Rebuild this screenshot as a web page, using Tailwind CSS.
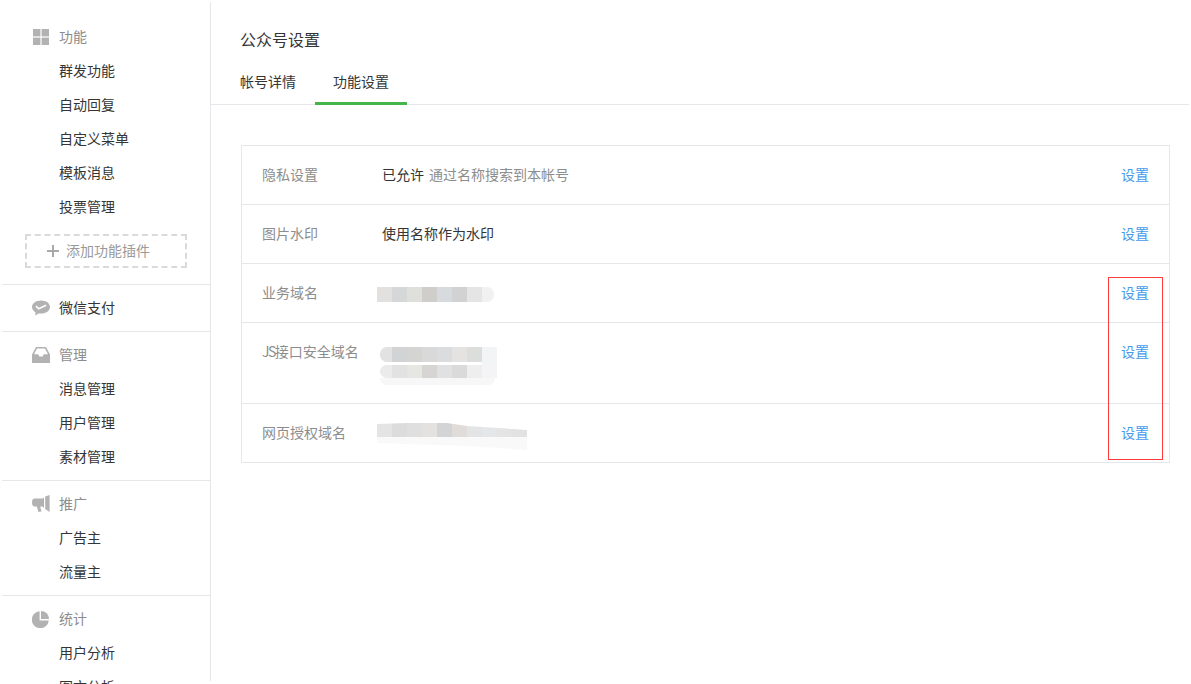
<!DOCTYPE html>
<html lang="zh-CN">
<head>
<meta charset="utf-8">
<title>公众号设置</title>
<script src="https://cdn.jsdelivr.net/npm/@tailwindcss/browser@4"></script>
</head>
<body class="bg-white">
<div class="flex h-[684px] w-[1191px] overflow-hidden bg-white font-['Microsoft_YaHei','Noto_Sans_CJK_SC',sans-serif] text-sm text-[#353535]">
  <aside class="mt-[2px] h-[679px] w-[211px] shrink-0 border-r border-[#e7e7eb] pt-[18px]">
    <div class="flex h-[34px] items-center text-[#8d8d8d]">
      <span class="flex w-[59px] justify-start pl-[33px]">
        <svg width="16" height="16" viewBox="0 0 16 16" fill="#b2b2b2"><rect width="7.4" height="7.4"/><rect x="8.6" width="7.4" height="7.4"/><rect y="8.6" width="7.4" height="7.4"/><rect x="8.6" y="8.6" width="7.4" height="7.4"/></svg>
      </span>
      <span class="pb-[2px]">功能</span>
    </div>
    <div class="h-[34px] pl-[59px] leading-8">群发功能</div>
    <div class="h-[34px] pl-[59px] leading-8">自动回复</div>
    <div class="h-[34px] pl-[59px] leading-8">自定义菜单</div>
    <div class="h-[34px] pl-[59px] leading-8">模板消息</div>
    <div class="h-[34px] pl-[59px] leading-8">投票管理</div>
    <div class="mb-4 ml-[25px] mt-[10px] flex h-[34px] w-[162px] items-center border-2 border-dashed border-[#d9dadc] pl-5 text-[#9a9a9a]">
      <svg width="12" height="12" viewBox="0 0 12 12" fill="#a8a8a8" class="mr-[7px]"><rect x="5" width="2" height="12"/><rect y="5" width="12" height="2"/></svg>
      <span class="pb-[2px]">添加功能插件</span>
    </div>
    <div class="ml-[2px] border-t border-[#e7e7eb] py-[6px]">
      <div class="flex h-[34px] items-center">
        <span class="flex w-[57px] pl-[30px]">
          <svg width="18" height="16" viewBox="0 0 18 16"><path fill="#b2b2b2" d="M9 0.5C4 0.5 0 3.4 0 7c0 2.1 1.4 4 3.5 5.2L3.2 15.5l3.3-2.1c.8.2 1.6.2 2.5.2 5 0 9-2.9 9-6.6S14 .5 9 .5z"/><path fill="none" stroke="#fff" stroke-width="1.6" d="M4 6l2.6 2.8 7.6-3.6"/></svg>
        </span>
        <span class="pb-[2px]">微信支付</span>
      </div>
    </div>
    <div class="ml-[2px] border-t border-[#e7e7eb] py-[6px]">
      <div class="-ml-[2px] flex h-[34px] items-center text-[#8d8d8d]">
        <span class="flex w-[59px] pl-[32px]">
          <svg width="18" height="16" viewBox="0 0 18 16"><path fill="#b2b2b2" fill-rule="evenodd" d="M4 0h10l4 7.5V16H0V7.5zM5 1.6L2 7.2h4.2L7.4 9.4h3.2l1.2-2.2H16L13 1.6z"/></svg>
        </span>
        <span class="pb-[2px]">管理</span>
      </div>
      <div class="h-[34px] pl-[57px] leading-8">消息管理</div>
      <div class="h-[34px] pl-[57px] leading-8">用户管理</div>
      <div class="h-[34px] pl-[57px] leading-8">素材管理</div>
    </div>
    <div class="ml-[2px] border-t border-[#e7e7eb] py-[6px]">
      <div class="-ml-[2px] flex h-[34px] items-center text-[#8d8d8d]">
        <span class="flex w-[59px] pl-[32px]">
          <svg width="18" height="18" viewBox="0 0 18 18"><path fill="#b2b2b2" d="M2.5 3.5H10.5L12 2.5V13L10.5 11.5H8.2L9.5 16.5 6.5 17 4.8 11.5H2.5C1 11.5 0 10 0 7.5S1 3.5 2.5 3.5z"/><path fill="#b2b2b2" d="M13.2 1.6L17.6 0v17l-4.4-3z"/></svg>
        </span>
        <span class="pb-[2px]">推广</span>
      </div>
      <div class="h-[34px] pl-[57px] leading-8">广告主</div>
      <div class="h-[34px] pl-[57px] leading-8">流量主</div>
    </div>
    <div class="ml-[2px] border-t border-[#e7e7eb] py-[6px]">
      <div class="-ml-[2px] flex h-[34px] items-center text-[#8d8d8d]">
        <span class="flex w-[59px] pl-[32px]">
          <svg width="17" height="17" viewBox="0 0 17 17"><path fill="#b2b2b2" d="M7.6 0.2V9.4H16.8A8.5 8.5 0 1 1 7.6 0.2z"/><path fill="#b2b2b2" d="M9 0a8 8 0 0 1 8 8H9z"/></svg>
        </span>
        <span class="pb-[2px]">统计</span>
      </div>
      <div class="h-[34px] pl-[57px] leading-8">用户分析</div>
      <div class="h-[34px] pl-[57px] leading-8">图文分析</div>
    </div>
  </aside>

  <main class="mr-[2px] min-w-0 flex-1">
    <header class="h-[105px] border-b border-[#e7e7eb] pl-[29px] pt-[27px]">
      <h1 class="h-6 text-base leading-6 text-[#353535]">公众号设置</h1>
      <nav class="mt-[13px] flex h-[41px]">
        <a class="mr-[19px] h-[41px] leading-[34px]">帐号详情</a>
        <a class="h-[41px] border-b-[3px] border-[#44b549] px-[18px] leading-[34px]">功能设置</a>
      </nav>
    </header>
    <div class="relative ml-[30px] mt-10 w-[929px] border border-[#e7e7eb]">
      <div class="flex h-[59px] border-b border-[#e7e7eb] leading-[56px]">
        <div class="w-[140px] shrink-0 pl-5 text-[#8d8d8d]">隐私设置</div>
        <div class="flex-1">已允许<span class="ml-[5px] text-[#8d8d8d]">通过名称搜索到本帐号</span></div>
        <a class="pr-5 text-[#459ae9]">设置</a>
      </div>
      <div class="flex h-[59px] border-b border-[#e7e7eb] leading-[56px]">
        <div class="w-[140px] shrink-0 pl-5 text-[#8d8d8d]">图片水印</div>
        <div class="flex-1">使用名称作为水印</div>
        <a class="pr-5 text-[#459ae9]">设置</a>
      </div>
      <div class="flex h-[59px] border-b border-[#e7e7eb] leading-[56px]">
        <div class="w-[140px] shrink-0 pl-5 text-[#8d8d8d]">业务域名</div>
        <div class="flex-1 pt-[23px]">
          <div class="-ml-[5px] flex h-[15px] w-[117px] overflow-hidden rounded-r-[7px]">
            <i class="w-[15px] bg-[#e2e1df]"></i><i class="w-[15px] bg-[#d5d7d9]"></i><i class="w-[15px] bg-[#dfdfdb]"></i><i class="w-[15px] bg-[#cfcecb]"></i><i class="w-[15px] bg-[#d7dbde]"></i><i class="w-[15px] bg-[#d2d2d2]"></i><i class="w-[15px] bg-[#e5e5e5]"></i><i class="w-[12px] bg-[#f1f1f1]"></i>
          </div>
        </div>
        <a class="pr-5 text-[#459ae9]">设置</a>
      </div>
      <div class="flex h-[81px] border-b border-[#e7e7eb] leading-[56px]">
        <div class="w-[140px] shrink-0 pl-5 text-[#8d8d8d]"><span class="tracking-[-1.5px]">JS</span>接口安全域名</div>
        <div class="flex-1 pt-6">
          <div class="-ml-[2px] flex h-[15px] w-[117px] overflow-hidden rounded-l-[7px]">
            <i class="w-[12px] bg-[#e2e2e2]"></i><i class="w-[15px] bg-[#d2d3d4]"></i><i class="w-[15px] bg-[#d4d4d2]"></i><i class="w-[15px] bg-[#d9d9d9]"></i><i class="w-[15px] bg-[#dadcdd]"></i><i class="w-[15px] bg-[#e4e3e1]"></i><i class="w-[15px] bg-[#dcdedb]"></i><i class="w-[15px] bg-[#f3f4f6]"></i>
          </div>
          <div class="-ml-[2px] flex h-[3px] w-[117px] justify-end"><i class="w-[15px] bg-[#f3f4f6]"></i></div>
          <div class="-ml-[2px] flex h-[13px] w-[117px] overflow-hidden rounded-l-[7px]">
            <i class="w-[12px] bg-[#ebebeb]"></i><i class="w-[15px] bg-[#e2e2e2]"></i><i class="w-[15px] bg-[#e6e6e3]"></i><i class="w-[15px] bg-[#d6d5d3]"></i><i class="w-[15px] bg-[#dfe1e3]"></i><i class="w-[15px] bg-[#dadada]"></i><i class="w-[15px] bg-[#eeeeee]"></i><i class="w-[15px] bg-[#f4f4f6]"></i>
          </div>
          <div class="-ml-[2px] h-[7px] w-[115px] rounded-b-[7px] bg-[#f7f7f7]"></div>
        </div>
        <a class="pr-5 text-[#459ae9]">设置</a>
      </div>
      <div class="flex h-[58px] leading-[56px]">
        <div class="w-[140px] shrink-0 pl-5 text-[#8d8d8d]">网页授权域名</div>
        <div class="flex-1 pt-[19px]">
          <div class="-ml-[5px] w-[150px] [clip-path:polygon(0_1px,30px_0,70px_0,90px_3px,150px_7px,150px_27px,90px_23px,0_20px)]">
            <div class="flex h-[14px]">
              <i class="w-[15px] bg-[#e4e4e4]"></i><i class="w-[15px] bg-[#dcdcdc]"></i><i class="w-[15px] bg-[#dfdfdf]"></i><i class="w-[15px] bg-[#e3e2e0]"></i><i class="w-[15px] bg-[#d2d4d6]"></i><i class="w-[15px] bg-[#e0dcd9]"></i><i class="w-[15px] bg-[#e2e4e5]"></i><i class="w-[15px] bg-[#e5e6e7]"></i><i class="w-[15px] bg-[#e4e4e4]"></i><i class="w-[15px] bg-[#e2e2e2]"></i>
            </div>
            <div class="h-[13px] bg-[#f9f9f9]"></div>
          </div>
        </div>
        <a class="pr-5 text-[#459ae9]">设置</a>
      </div>
      <div class="absolute left-[866px] top-[131px] h-[183px] w-[55px] border border-[#ff3b3b]"></div>
    </div>
  </main>
</div>
</body>
</html>
